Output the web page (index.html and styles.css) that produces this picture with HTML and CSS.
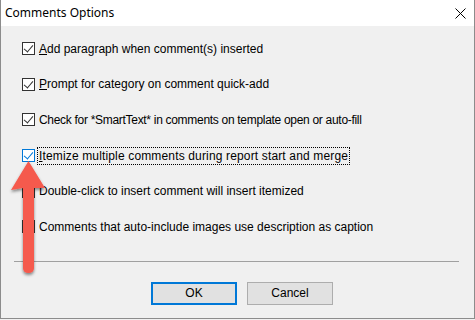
FILE: index.html
```
<!DOCTYPE html>
<html lang="en">
<head>
    <meta charset="UTF-8">
    <title>Comments Options</title>
    <link rel="stylesheet" href="styles.css">
</head>
<body>
    <div class="dialog">
        <!-- Title bar -->
        <div class="title-bar">
            <span class="title">Comments Options</span>
            <svg class="close" width="11" height="11" viewBox="0 0 11 11">
                <path d="M0.5 0.5 L10.5 10.5 M10.5 0.5 L0.5 10.5" stroke="#000" stroke-width="1" fill="none"/>
            </svg>
        </div>

        <!-- Options -->
        <div class="dialog-body">
            <div class="options">
                <label class="option">
                    <span class="box checked"></span>
                    <span class="text"><u>A</u>dd paragraph when comment(s) inserted</span>
                </label>
                <label class="option">
                    <span class="box checked"></span>
                    <span class="text"><u>P</u>rompt for category on comment quick-add</span>
                </label>
                <label class="option">
                    <span class="box checked"></span>
                    <span class="text narrow">Check for *SmartText* in comments on template open or auto-fill</span>
                </label>
                <label class="option">
                    <span class="box checked active"></span>
                    <span class="text focused"><u>I</u>temize multiple comments during report start and merge</span>
                </label>
                <label class="option">
                    <span class="box"></span>
                    <span class="text">Double-click to insert comment will insert itemized</span>
                </label>
                <label class="option">
                    <span class="box"></span>
                    <span class="text">Comments that auto-include images use description as caption</span>
                </label>
            </div>

            <div class="separator"></div>

            <div class="buttons">
                <button class="btn default">OK</button>
                <button class="btn">Cancel</button>
            </div>
        </div>

        <!-- Callout arrow -->
        <svg class="arrow" width="50" height="130" viewBox="0 0 50 130">
            <defs>
                <filter id="shadow" x="-50%" y="-20%" width="200%" height="140%">
                    <feDropShadow dx="0" dy="2" stdDeviation="1.5" flood-color="#000" flood-opacity="0.45"/>
                </filter>
            </defs>
            <g filter="url(#shadow)">
                <path d="M27.5 1 L44 28 L33 28 L33 108 Q33 113 27.5 113 Q22 113 22 108 L22 28 L10 30 Z" fill="#f55a4e"/>
            </g>
        </svg>
    </div>
</body>
</html>
```

FILE: styles.css
```
body {
    margin: 0;
    padding: 0;
    background-color: #f0f0f0;
}
.dialog {
    position: relative;
    width: 473px;
    height: 318px;
    border: 1px solid #8c8c8c;
    border-top: none;
    background-color: #f0f0f0;
    font-family: "Liberation Sans", Arial, sans-serif;
    color: #000;
    overflow: hidden;
}
.title-bar {
    height: 26px;
    background-color: #ffffff;
    display: flex;
    align-items: center;
    justify-content: space-between;
    padding: 0 8px 0 4px;
}
.title {
    font-family: "Noto Sans", "Open Sans", sans-serif;
    font-size: 12px;
    padding-bottom: 1px;
}
.dialog-body {
    padding: 5px 14px 0 21px;
}
.options {
    display: flex;
    flex-direction: column;
}
.option {
    height: 35.6px;
    display: flex;
    align-items: center;
    gap: 2px;
    font-size: 12px;
}
.box {
    width: 11px;
    height: 11px;
    border: 1px solid #333333;
    background-color: #ffffff;
    position: relative;
    flex-shrink: 0;
}
.box.checked::after {
    content: "";
    position: absolute;
    left: 3px;
    top: 0px;
    width: 4px;
    height: 8px;
    border-right: 1px solid #333333;
    border-bottom: 1px solid #333333;
    transform: rotate(40deg);
}
.box.active {
    border-color: #0078d7;
}
.box.active::after {
    border-color: #0078d7;
}
.text {
    padding: 1px 1px;
    border: 1px dotted transparent;
}
.text.narrow {
    letter-spacing: -0.3px;
}
.text.focused {
    border-color: #000;
    letter-spacing: 0.15px;
}
.separator {
    margin: 16px 0 0 -8px;
    height: 1px;
    width: 445px;
    background-color: #a0a0a0;
}
.buttons {
    display: flex;
    justify-content: center;
    gap: 10px;
    margin-top: 20px;
    padding-left: 2px;
}
.btn {
    width: 86px;
    height: 23px;
    background-color: #e1e1e1;
    border: 1px solid #adadad;
    font-family: "Liberation Sans", Arial, sans-serif;
    font-size: 12px;
    color: #000;
    padding: 0;
}
.btn.default {
    border: 2px solid #0078d7;
}
.arrow {
    position: absolute;
    left: 0;
    top: 160px;
}
```
